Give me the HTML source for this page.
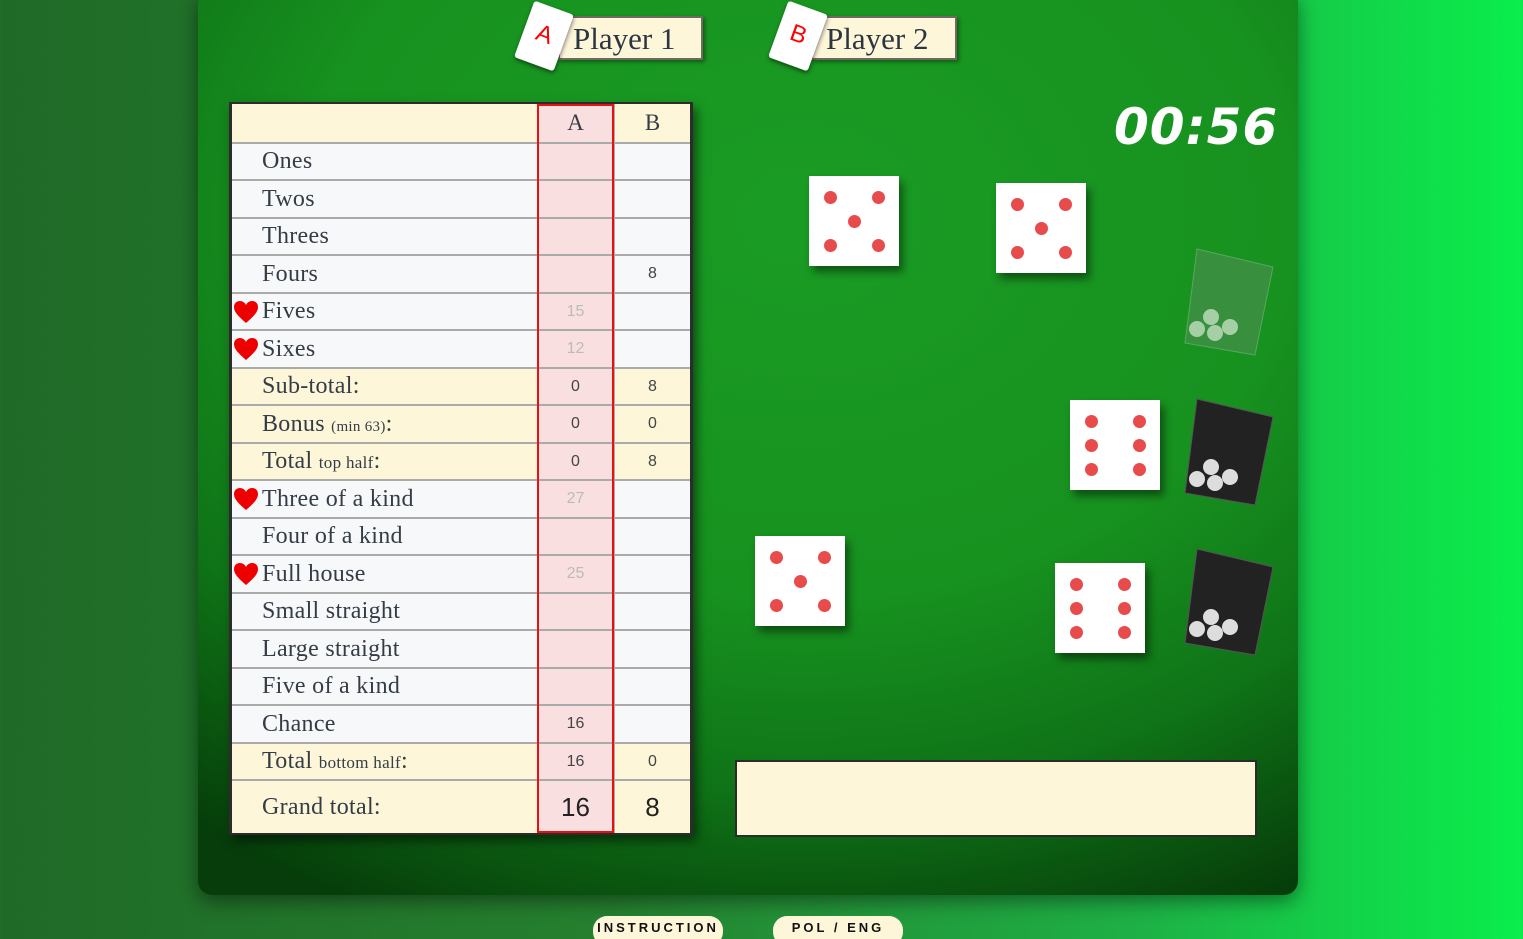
<!DOCTYPE html>
<html><head><meta charset="utf-8"><style>
*{margin:0;padding:0;box-sizing:border-box}
html,body{width:1523px;height:939px;overflow:hidden}
body{position:relative;background:linear-gradient(90deg,#1f6a27 0%,#25802f 40%,#1eb146 75%,#0aee4c 100%);font-family:"Liberation Serif",serif}
#board{position:absolute;left:198px;top:-10px;width:1100px;height:905px;border-radius:14px;background:radial-gradient(ellipse 90% 85% at 55% 25%,#1a9c24 0%,#17911f 50%,#0f7317 75%,#063d0a 100%);box-shadow:0 6px 20px rgba(0,0,0,.45)}
.abs{position:absolute}
.nm{position:absolute;top:16px;height:44px;background:#fdf6d9;border:2px solid #6f6a60;font-size:31px;color:#2c3540;padding-left:13px;line-height:42px;box-shadow:2px 2px 4px rgba(0,0,0,.4)}
.card{position:absolute;width:42px;height:60px;background:#fff;border-radius:3px;transform:rotate(20deg);box-shadow:1px 2px 4px rgba(0,0,0,.5);color:#f00;font-family:"Liberation Sans",sans-serif;font-size:24px;text-align:center;line-height:58px}
#tbl{position:absolute;left:229px;top:102px;width:464px;height:733px;background:#2c2c2c;box-shadow:4px 6px 10px rgba(0,0,0,.5)}
.r{position:absolute;left:3px;width:458px;font-size:24px;color:#343c46}
.l{position:absolute;left:30px;top:0;letter-spacing:.3px}
.a,.b{position:absolute;top:0;text-align:center;font-family:"Liberation Sans",sans-serif;font-size:16px;color:#444;height:100%}
.a{left:306px;width:75px;background:#f9dfe0}.b{left:383px;width:75px}
.hdr .a,.hdr .b{font-family:"Liberation Serif",serif;font-size:23px;color:#343c46}
.big .a,.big .b{font-size:26px;color:#222}
.lite .a{color:#bbb}
.hr{position:absolute;left:1px}
.die{position:absolute;width:90px;height:90px;background:#fff;box-shadow:4px 6px 8px rgba(0,0,0,.45)}
.die i{position:absolute;width:13px;height:13px;border-radius:50%;background:#e84b4b}
.btn{position:absolute;top:916px;width:130px;height:30px;border-radius:14px;background:#fdf6d9;font-family:"Liberation Sans",sans-serif;font-weight:bold;font-size:13px;letter-spacing:3px;text-align:center;line-height:24px;color:#111}
</style></head><body>
<div id="board"></div>

<div class="nm" style="left:558px;width:145px">Player 1</div>
<div class="card" style="left:523px;top:6px">A</div>
<div class="nm" style="left:811px;width:146px">Player 2</div>
<div class="card" style="left:777px;top:6px">B</div>

<div class="abs" style="left:1114px;top:98px;font-family:'DejaVu Sans','Liberation Sans',sans-serif;font-weight:bold;font-style:italic;font-size:50px;color:#fff;letter-spacing:1px">00:56</div>

<div id="tbl"><div id="rows"></div></div>

<div class="abs" style="left:735px;top:760px;width:522px;height:77px;background:#fdf6d9;border:2px solid #2b2b2b"></div>

<div class="die" style="left:809px;top:176px"><i style="left:15px;top:15px"></i><i style="left:63px;top:15px"></i><i style="left:39px;top:39px"></i><i style="left:15px;top:63px"></i><i style="left:63px;top:63px"></i></div>
<div class="die" style="left:996px;top:183px"><i style="left:15px;top:15px"></i><i style="left:63px;top:15px"></i><i style="left:39px;top:39px"></i><i style="left:15px;top:63px"></i><i style="left:63px;top:63px"></i></div>
<div class="die" style="left:1070px;top:400px"><i style="left:15px;top:15px"></i><i style="left:63px;top:15px"></i><i style="left:15px;top:39px"></i><i style="left:63px;top:39px"></i><i style="left:15px;top:63px"></i><i style="left:63px;top:63px"></i></div>
<div class="die" style="left:755px;top:536px"><i style="left:15px;top:15px"></i><i style="left:63px;top:15px"></i><i style="left:39px;top:39px"></i><i style="left:15px;top:63px"></i><i style="left:63px;top:63px"></i></div>
<div class="die" style="left:1055px;top:563px"><i style="left:15px;top:15px"></i><i style="left:63px;top:15px"></i><i style="left:15px;top:39px"></i><i style="left:63px;top:39px"></i><i style="left:15px;top:63px"></i><i style="left:63px;top:63px"></i></div>

<svg class="abs" style="left:1175px;top:245px" width="105" height="420" viewBox="0 0 105 420">
<g><path d="M22 4 L98 22 L80 110 L10 98 Z" fill="#4f8f55" opacity=".6" stroke="#7fb884" stroke-width="1"/><circle cx="22" cy="84" r="8" fill="#a6cfa6"/><circle cx="40" cy="88" r="8" fill="#a6cfa6"/><circle cx="55" cy="82" r="8" fill="#a6cfa6"/><circle cx="36" cy="72" r="8" fill="#a6cfa6"/></g>
<g><path d="M22 154 L98 172 L80 260 L10 248 Z" fill="#222" stroke="#555"/><circle cx="22" cy="234" r="8" fill="#ddd"/><circle cx="40" cy="238" r="8" fill="#ddd"/><circle cx="55" cy="232" r="8" fill="#ddd"/><circle cx="36" cy="222" r="8" fill="#ddd"/></g>
<g><path d="M22 304 L98 322 L80 410 L10 398 Z" fill="#222" stroke="#555"/><circle cx="22" cy="384" r="8" fill="#ddd"/><circle cx="40" cy="388" r="8" fill="#ddd"/><circle cx="55" cy="382" r="8" fill="#ddd"/><circle cx="36" cy="372" r="8" fill="#ddd"/></g>
</svg>

<div class="btn" style="left:593px">INSTRUCTION</div>
<div class="btn" style="left:773px">POL / ENG</div>

<script>
var b=[104,142,179,217,254,292,329,367,404,442,479,517,554,592,629,667,704,742,779,833];
var rows=[
["","A","B",1,0],
["Ones","","",0,0],["Twos","","",0,0],["Threes","","",0,0],["Fours","","8",0,0],
["Fives","15","",0,1],["Sixes","12","",0,1],["Sub-total:","0","8",1,0],
["Bonus <span style='font-size:15px'>(min 63)</span>:","0","0",1,0],
["Total <span style='font-size:17px'>top half</span>:","0","8",1,0],
["Three of a kind","27","",0,1],["Four of a kind","","",0,0],["Full house","25","",0,1],
["Small straight","","",0,0],["Large straight","","",0,0],["Five of a kind","","",0,0],
["Chance","16","",0,0],["Total <span style='font-size:17px'>bottom half</span>:","16","0",1,0],
["Grand total:","16","8",1,0]];
var h="";
var heart="<svg width='26' height='24' viewBox='0 0 26 24'><path d='M13 23 C5 16 1 12 1 7 C1 3 4 1 7 1 C10 1 12 3 13 5 C14 3 16 1 19 1 C22 1 25 3 25 7 C25 12 21 16 13 23Z' fill='#ee0000'/></svg>";
for(var i=0;i<rows.length;i++){var r=rows[i];var t,hh;
if(i==0){t=2;hh=38;}else{t=b[i]-102+2;hh=b[i+1]-b[i]-2;}
var cls="r"+(i==0?" hdr":"")+(i==18?" big":"")+((r[3]||i==16||i==0)?"":" lite");
h+="<div class='"+cls+"' style='top:"+t+"px;height:"+hh+"px;line-height:"+hh+"px;background:"+(r[3]?"#fdf6d9":"#f7f8fa")+"'>"+(r[4]?"<span class='hr' style='top:"+(hh/2-12)+"px;line-height:0'>"+heart+"</span>":"")+"<span class='l'>"+r[0]+"</span><span class='a'>"+r[1]+"</span><span class='b'>"+r[2]+"</span></div>";}
for(var j=1;j<b.length-1;j++){h+="<div class='abs' style='left:3px;top:"+(b[j]-102)+"px;width:458px;height:2px;background:#aaa'></div>";}
h+="<div class='abs' style='left:384px;top:2px;width:2px;height:729px;background:#aaa'></div>";
h+="<div class='abs' style='left:308px;top:2px;width:77px;height:729px;border:2px solid #e81010'></div>";
document.getElementById('rows').innerHTML=h;
</script>
</body></html>
